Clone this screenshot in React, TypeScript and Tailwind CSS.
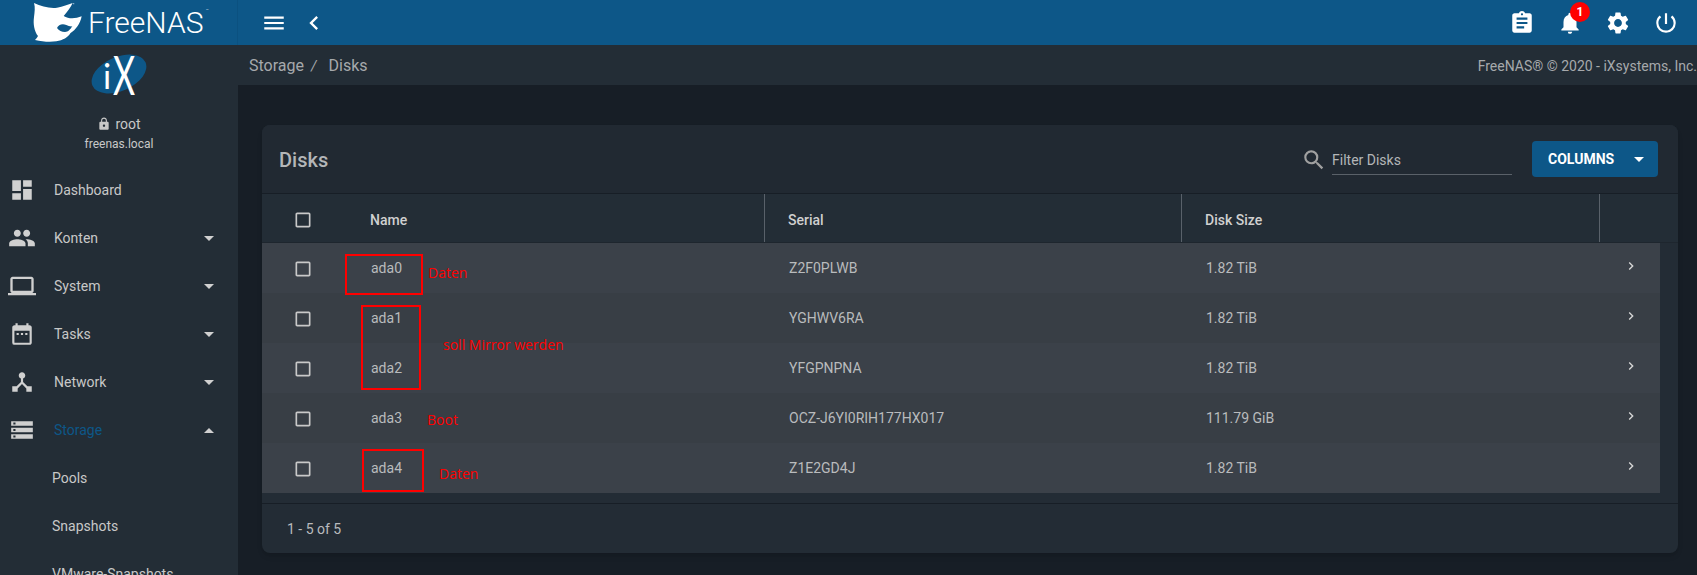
import type { ReactNode } from "react";
import {
  MdAssignment,
  MdCheckBoxOutlineBlank,
  MdChevronLeft,
  MdChevronRight,
  MdDashboard,
  MdDateRange,
  MdDeviceHub,
  MdLaptop,
  MdLock,
  MdMenu,
  MdNotifications,
  MdPeople,
  MdPowerSettingsNew,
  MdSearch,
  MdSettings,
  MdStorage,
} from "react-icons/md";

const NAV_ITEMS: { label: string; icon: ReactNode; caret?: "down" | "up"; active?: boolean }[] = [
  { label: "Dashboard", icon: <MdDashboard size={26} /> },
  { label: "Konten", icon: <MdPeople size={28} />, caret: "down" },
  { label: "System", icon: <MdLaptop size={28} />, caret: "down" },
  { label: "Tasks", icon: <MdDateRange size={26} />, caret: "down" },
  { label: "Network", icon: <MdDeviceHub size={26} />, caret: "down" },
  { label: "Storage", icon: <MdStorage size={26} />, caret: "up", active: true },
];

const SUB_ITEMS = ["Pools", "Snapshots", "VMware-Snapshots"];

const DISKS = [
  { name: "ada0", serial: "Z2F0PLWB", size: "1.82 TiB", bg: "bg-[#3b4149]" },
  { name: "ada1", serial: "YGHWV6RA", size: "1.82 TiB", bg: "bg-[#383e45]" },
  { name: "ada2", serial: "YFGPNPNA", size: "1.82 TiB", bg: "bg-[#3b4149]" },
  { name: "ada3", serial: "OCZ-J6YI0RIH177HX017", size: "111.79 GiB", bg: "bg-[#383e45]" },
  { name: "ada4", serial: "Z1E2GD4J", size: "1.82 TiB", bg: "bg-[#3b4149]" },
];

const COLS = "grid grid-cols-[503px_417px_418px_1fr]";

function Caret({ up }: { up?: boolean }) {
  return (
    <span
      className={
        up
          ? "h-0 w-0 border-x-[5px] border-b-[5px] border-x-transparent border-b-[#d0d0d0]"
          : "h-0 w-0 border-x-[5px] border-t-[5px] border-x-transparent border-t-[#d0d0d0]"
      }
    />
  );
}

function FishLogo() {
  return (
    <svg width="54" height="42" viewBox="100 0 162 126" className="shrink-0">
      <path
        fill="#fff"
        d="M103 3C125 13 150 20 172 17C190 14 205 8 219 3C213 16 203 29 192 42C208 52 228 50 246 43C242 65 228 84 212 94C205 106 190 115 170 118C150 121 128 119 106 114C110 110 113 106 115 102C104 88 100 66 103 45C105 30 107 15 103 3Z"
      />
      <path
        fill="#0d5788"
        d="M172 78C176 68 188 64 200 69C206 72 212 74 218 73C212 82 206 90 196 90C186 90 178 86 172 78Z"
      />
      <circle cx="222" cy="5" r="2" fill="#9fc0d8" />
    </svg>
  );
}

function IxLogo() {
  return (
    <svg width="58" height="46" viewBox="0 0 58 46">
      <ellipse cx="29" cy="21" rx="29" ry="17" transform="rotate(-24 29 21)" fill="#0d5788" />
      <text x="13" y="36" fill="#fff" fontSize="34" fontFamily="Lato, sans-serif">
        i
      </text>
      <text
        transform="translate(23 42) scale(0.62 1)"
        fill="#fff"
        fontSize="55"
        fontFamily="Lato, sans-serif"
      >
        X
      </text>
    </svg>
  );
}

function Annotation({ className, children }: { className: string; children: ReactNode }) {
  return (
    <span className={`absolute font-['Open_Sans',sans-serif] text-[14px] leading-none text-[#f00] ${className}`}>
      {children}
    </span>
  );
}

export default function App() {
  return (
    <div className="relative flex h-[575px] w-[1697px] flex-col overflow-hidden bg-[#171e26] font-['Roboto',sans-serif] text-[14px] text-[#c8c8c8]">
      <header className="flex h-[45px] shrink-0 items-center bg-[#0d5788] text-white">
        <div className="flex h-full w-[238px] shrink-0 items-center gap-[1px] border-r border-[#0b5180] pl-[33px]">
          <FishLogo />
          <span className="relative font-['Roboto',sans-serif] text-[30px] leading-none font-light">
            FreeNAS
            <span className="absolute top-[1px] -right-[5px] text-[4px]">™</span>
          </span>
        </div>
        <MdMenu size={26} className="ml-[23px]" />
        <MdChevronLeft size={28} className="ml-[13px]" />
        <div className="ml-auto flex items-center gap-[22px] pr-[18px]">
          <MdAssignment size={26} />
          <span className="relative">
            <MdNotifications size={26} />
            <span className="absolute -top-[8px] -right-[7px] flex h-[20px] w-[20px] items-center justify-center rounded-full bg-[#f00] text-[12px] font-bold">
              1
            </span>
          </span>
          <MdSettings size={26} />
          <MdPowerSettingsNew size={26} />
        </div>
      </header>

      <div className="flex min-h-0 flex-1">
        <aside className="w-[238px] shrink-0 bg-[#232d36]">
          <div className="flex h-[121px] flex-col items-center pt-[8px]">
            <IxLogo />
            <div className="mt-[16px] flex items-center gap-[4px] text-[14px] leading-[18px]">
              <MdLock size={14} />
              root
            </div>
            <div className="mt-[3px] text-[12px] leading-[16px]">freenas.local</div>
          </div>
          {NAV_ITEMS.map((item) => (
            <div key={item.label} className="flex h-[48px] items-center">
              <span className="flex w-[44px] justify-center text-[#d0d0d0]">{item.icon}</span>
              <span className={item.active ? "ml-[10px] text-[#0d5788]" : "ml-[10px]"}>{item.label}</span>
              {item.caret && (
                <span className="mr-[24px] ml-auto flex">
                  <Caret up={item.caret === "up"} />
                </span>
              )}
            </div>
          ))}
          {SUB_ITEMS.map((label) => (
            <div key={label} className="flex h-[48px] items-center pl-[52px]">
              {label}
            </div>
          ))}
        </aside>

        <main className="min-w-0 flex-1">
          <div className="flex h-[40px] items-center justify-between bg-[#232d36] pt-[2px] pl-[11px] text-[#a6a9ac]">
            <div className="flex items-center text-[16px]">
              <span>Storage</span>
              <span className="ml-[7px] text-[14px] italic">/</span>
              <span className="ml-[12px]">Disks</span>
            </div>
            <span className="text-[14px] whitespace-nowrap">FreeNAS® © 2020 - iXsystems, Inc.</span>
          </div>

          <section className="mt-[40px] ml-[24px] h-[428px] w-[1416px] overflow-hidden rounded-lg bg-[#232c35] shadow-md">
            <div className="flex h-[69px] items-center border-b border-[#171e26] bg-[#212932] pr-[20px] pl-[17px]">
              <h1 className="mt-[2px] text-[20px] font-medium text-[#b4b6b8]">Disks</h1>
              <MdSearch size={26} className="mt-[2px] ml-auto text-[#a0a0a0]" />
              <div className="mt-[1px] ml-[5px] flex h-[30px] w-[180px] items-center border-b border-[#5a6169] pt-[2px] text-[#b4b6b8]">
                Filter Disks
              </div>
              <button className="ml-[20px] flex h-[36px] w-[126px] items-center rounded-[4px] bg-[#0d5788] pr-[14px] pl-[16px] text-[14px] font-bold text-white">
                COLUMNS
                <span className="ml-auto flex">
                  <span className="h-0 w-0 border-x-[5px] border-t-[5px] border-x-transparent border-t-white" />
                </span>
              </button>
            </div>

            <div className={`${COLS} h-[49px] items-center border-b border-[#1e262e] bg-[#232d36] pr-[18px] font-medium text-[#d0d0d0]`}>
              <div className="flex h-full items-center border-r border-[#59616a] pt-[4px]">
                <MdCheckBoxOutlineBlank size={20} className="ml-[31px] text-[#c8c8c8]" />
                <span className="ml-[57px]">Name</span>
              </div>
              <div className="flex h-full items-center border-r border-[#59616a] pt-[4px] pl-[23px]">Serial</div>
              <div className="flex h-full items-center border-r border-[#59616a] pt-[4px] pl-[23px]">Disk Size</div>
              <div />
            </div>

            <div className="mr-[18px]">
              {DISKS.map((disk) => (
                <div key={disk.name} className={`${COLS} h-[50px] items-center ${disk.bg}`}>
                  <div className="flex items-center">
                    <MdCheckBoxOutlineBlank size={20} className="mt-[2px] ml-[31px]" />
                    <span className="ml-[58px] text-[#b9bbbd]">{disk.name}</span>
                  </div>
                  <div className="pl-[24px] text-[#b9bbbd]">{disk.serial}</div>
                  <div className="pl-[24px] text-[#b9bbbd]">{disk.size}</div>
                  <div className="mb-[4px] flex justify-end pr-[21px]">
                    <MdChevronRight size={16} className="text-[#d8d8d8]" />
                  </div>
                </div>
              ))}
            </div>

            <div className="mt-[10px] flex h-[50px] items-center border-t border-[#171e26] pt-[2px] pl-[25px] text-[#b9bbbd]">
              1 - 5 of 5
            </div>
          </section>
        </main>
      </div>

      {/* red markup drawn over the screenshot */}
      <div className="absolute top-[254px] left-[345px] h-[41px] w-[78px] border-[2.5px] border-[#f00]" />
      <div className="absolute top-[305px] left-[361px] h-[85px] w-[60px] border-[2.5px] border-[#f00]" />
      <div className="absolute top-[449px] left-[362px] h-[43px] w-[62px] border-[2.5px] border-[#f00]" />
      <Annotation className="top-[266px] left-[428px]">Daten</Annotation>
      <Annotation className="top-[338px] left-[443px]">soll Mirror werden</Annotation>
      <Annotation className="top-[413px] left-[427px]">Boot</Annotation>
      <Annotation className="top-[467px] left-[439px]">Daten</Annotation>
    </div>
  );
}
